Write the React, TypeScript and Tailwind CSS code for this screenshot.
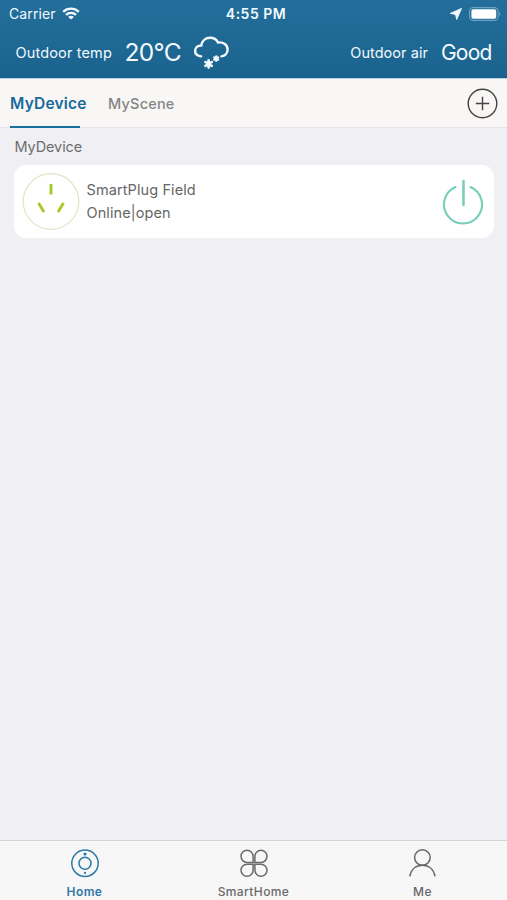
import type { ReactNode } from "react";

function StatusBar() {
  return (
    <div className="grid h-7 grid-cols-3 items-center pl-[9px] pr-[6px]">
      <div className="flex items-center gap-[6px]">
        <span className="-mt-px text-[14px] tracking-[0.1px]">Carrier</span>
        <svg className="-mt-[2px]" width="18" height="13" viewBox="0 0 18 13" fill="none" stroke="currentColor" strokeWidth="2.4">
          <path d="M1.2 4.8C5.6.6 12.4.6 16.8 4.8" />
          <path d="M4 7.9c2.9-2.6 7.1-2.6 10 0" />
          <path d="M9 12.6 6.1 9.9c1.7-1.5 4.1-1.5 5.8 0z" fill="currentColor" stroke="none" />
        </svg>
      </div>
      <span className="-mt-px pl-[2px] text-center text-[14px] font-semibold tracking-[0.5px]">4:55 PM</span>
      <div className="flex items-center justify-end gap-[7px]">
        <svg className="-mt-px" width="12" height="12" viewBox="0 0 12 12" fill="currentColor">
          <path d="M11.5.4.3 5.4l5.2 1 1.2 5.1z" stroke="currentColor" strokeWidth="0.9" strokeLinejoin="round" />
        </svg>
        <svg className="-mt-px" width="32" height="14" viewBox="0 0 32 14" fill="none">
          <rect x="0.6" y="0.6" width="28.4" height="12.8" rx="3.6" stroke="#6fa2c0" strokeWidth="1.1" />
          <rect x="2.4" y="2.3" width="24.8" height="9.4" rx="1.8" fill="#fff" />
          <path d="M30.2 4.8c1.6.7 1.6 3.7 0 4.4z" fill="#6fa2c0" />
        </svg>
      </div>
    </div>
  );
}

function SnowCloud() {
  return (
    <svg width="37" height="34" viewBox="0 0 37 34" fill="none" stroke="currentColor" strokeLinecap="round">
      <path
        d="M8.2 20.4C4.4 19.8 2.1 17.8 2.1 14.9c0-3.2 2.7-5.5 6.2-5.4C8.9 4.7 12.6 1.7 17 1.7c3.7 0 6.6 1.8 8 4.8 5.5-.8 9.6 2.6 9.6 7 0 3.7-2.6 6.4-6.2 6.9"
        strokeWidth="2.4"
      />
      <path d="M15.6 24.2v7.4M12.4 26l6.4 3.8M18.8 26l-6.4 3.8" strokeWidth="2.6" />
      <path d="M23.2 20.4v4.4M21.2 21.5l4 2.2M25.2 21.5l-4 2.2" strokeWidth="2.2" />
    </svg>
  );
}

function Weather() {
  return (
    <div className="flex h-[49px] items-center pl-[15.5px] pr-[15.5px]">
      <span className="w-[109px] text-[14.5px] tracking-[0.15px]">Outdoor temp</span>
      <span className="w-[68.5px] text-[24.5px] tracking-[-0.7px]">20°C</span>
      <SnowCloud />
      <span className="ml-auto text-[14.5px] tracking-[0.05px]">Outdoor air</span>
      <span className="ml-[13px] text-[21px] tracking-[-0.8px]">Good</span>
    </div>
  );
}

function Tabs() {
  return (
    <nav className="flex h-[49px] border-b border-[#e3e3e5] bg-[#f8f7f5] pl-[10px] pr-[9px]">
      <button className="relative flex w-[98px] items-center pt-[2px] text-[15.5px] font-semibold tracking-[0.2px] text-[#17699a]">
        MyDevice
        <span className="absolute -bottom-px left-0 h-[2px] w-[70px] bg-[#17709c]" />
      </button>
      <button className="pt-[2px] text-[14.5px] font-medium tracking-[0.2px] text-[#858585]">MyScene</button>
      <button className="ml-auto" aria-label="Add">
        <svg width="31" height="31" viewBox="0 0 31 31" fill="none" stroke="#444" strokeWidth="1.4">
          <circle cx="15.5" cy="15.5" r="14.3" />
          <path d="M15.5 8.8v13.4M8.8 15.5h13.4" />
        </svg>
      </button>
    </nav>
  );
}

function DeviceCard() {
  return (
    <div className="ml-[14px] mr-[13px] flex h-[73px] items-center rounded-[12px] bg-white pl-2 pr-[10px]">
      <svg width="58" height="58" viewBox="0 0 58 58" fill="none">
        <circle cx="29" cy="28.5" r="27.8" stroke="#dfe5c4" strokeWidth="1.2" />
        <path d="M29 11v10.5M16.5 30l5.5 9M41.5 30l-5.5 9" stroke="#a5c924" strokeWidth="2.8" />
      </svg>
      <div className="ml-[6.5px] text-[14.5px] leading-[22.5px] tracking-[0.1px] text-[#666]">
        <p>SmartPlug Field</p>
        <p>Online|open</p>
      </div>
      <svg className="ml-auto" width="42" height="46" viewBox="0 0 42 46" fill="none" stroke="#74ceb8" strokeWidth="2.1" strokeLinecap="round">
        <path d="M13.5 8a19 19 0 1 0 15 0" />
        <path d="M21.5 2v24" strokeWidth="2.5" />
      </svg>
    </div>
  );
}

function TabItem({ label, className, children }: { label: string; className: string; children: ReactNode }) {
  return (
    <button className={`flex flex-col items-center pt-[8px] ${className}`}>
      <svg className="-mt-px" width="30" height="30" viewBox="0 0 30 30" fill="none" stroke="currentColor" strokeWidth="1.5">
        {children}
      </svg>
      <span className="mt-[6px] text-[12px] leading-4 tracking-[0.4px]">{label}</span>
    </button>
  );
}

function BottomBar() {
  return (
    <footer className="grid h-[60px] grid-cols-3 border-t border-[#d4d4d8] bg-[#f7f7f8]">
      <TabItem label="Home" className="font-semibold text-[#2f78a5]">
        <circle cx="15" cy="15.3" r="13.2" />
        <circle cx="15" cy="15.3" r="6" />
        <circle cx="15" cy="6" r="1.6" fill="currentColor" stroke="none" />
        <circle cx="15" cy="24.9" r="1.1" fill="currentColor" stroke="none" />
      </TabItem>
      <TabItem label="SmartHome" className="font-medium text-[#6b6b6b]">
        <path d="M14.1 14.4H8a6.05 6.05 0 1 1 6.1-6.1z" />
        <path d="M15.9 14.4H22a6.05 6.05 0 1 0-6.1-6.1z" />
        <path d="M14.1 16.2H8a6.05 6.05 0 1 0 6.1 6.1z" />
        <path d="M15.9 16.2H22a6.05 6.05 0 1 1-6.1 6.1z" />
      </TabItem>
      <TabItem label="Me" className="font-medium text-[#666]">
        <circle cx="14.4" cy="9.5" r="7.8" />
        <path d="M1.8 28.4C3 21.4 7.8 17.3 14.4 17.3S25.8 21.4 27 28.4" />
      </TabItem>
    </footer>
  );
}

export default function App() {
  return (
    <div className="flex h-[900px] w-[507px] flex-col bg-[#efeff4] font-['Inter',sans-serif]">
      <header className="h-[79px] border-b border-[#b5d0df] bg-linear-to-b from-[#236e9b] to-[#1a638e] text-[#f2fafe]">
        <StatusBar />
        <Weather />
      </header>
      <Tabs />
      <main className="flex-1">
        <h2 className="flex h-[37px] items-center pl-[14.5px] text-[14.5px] tracking-[-0.1px] text-[#6e6e6e]">MyDevice</h2>
        <DeviceCard />
      </main>
      <BottomBar />
    </div>
  );
}
